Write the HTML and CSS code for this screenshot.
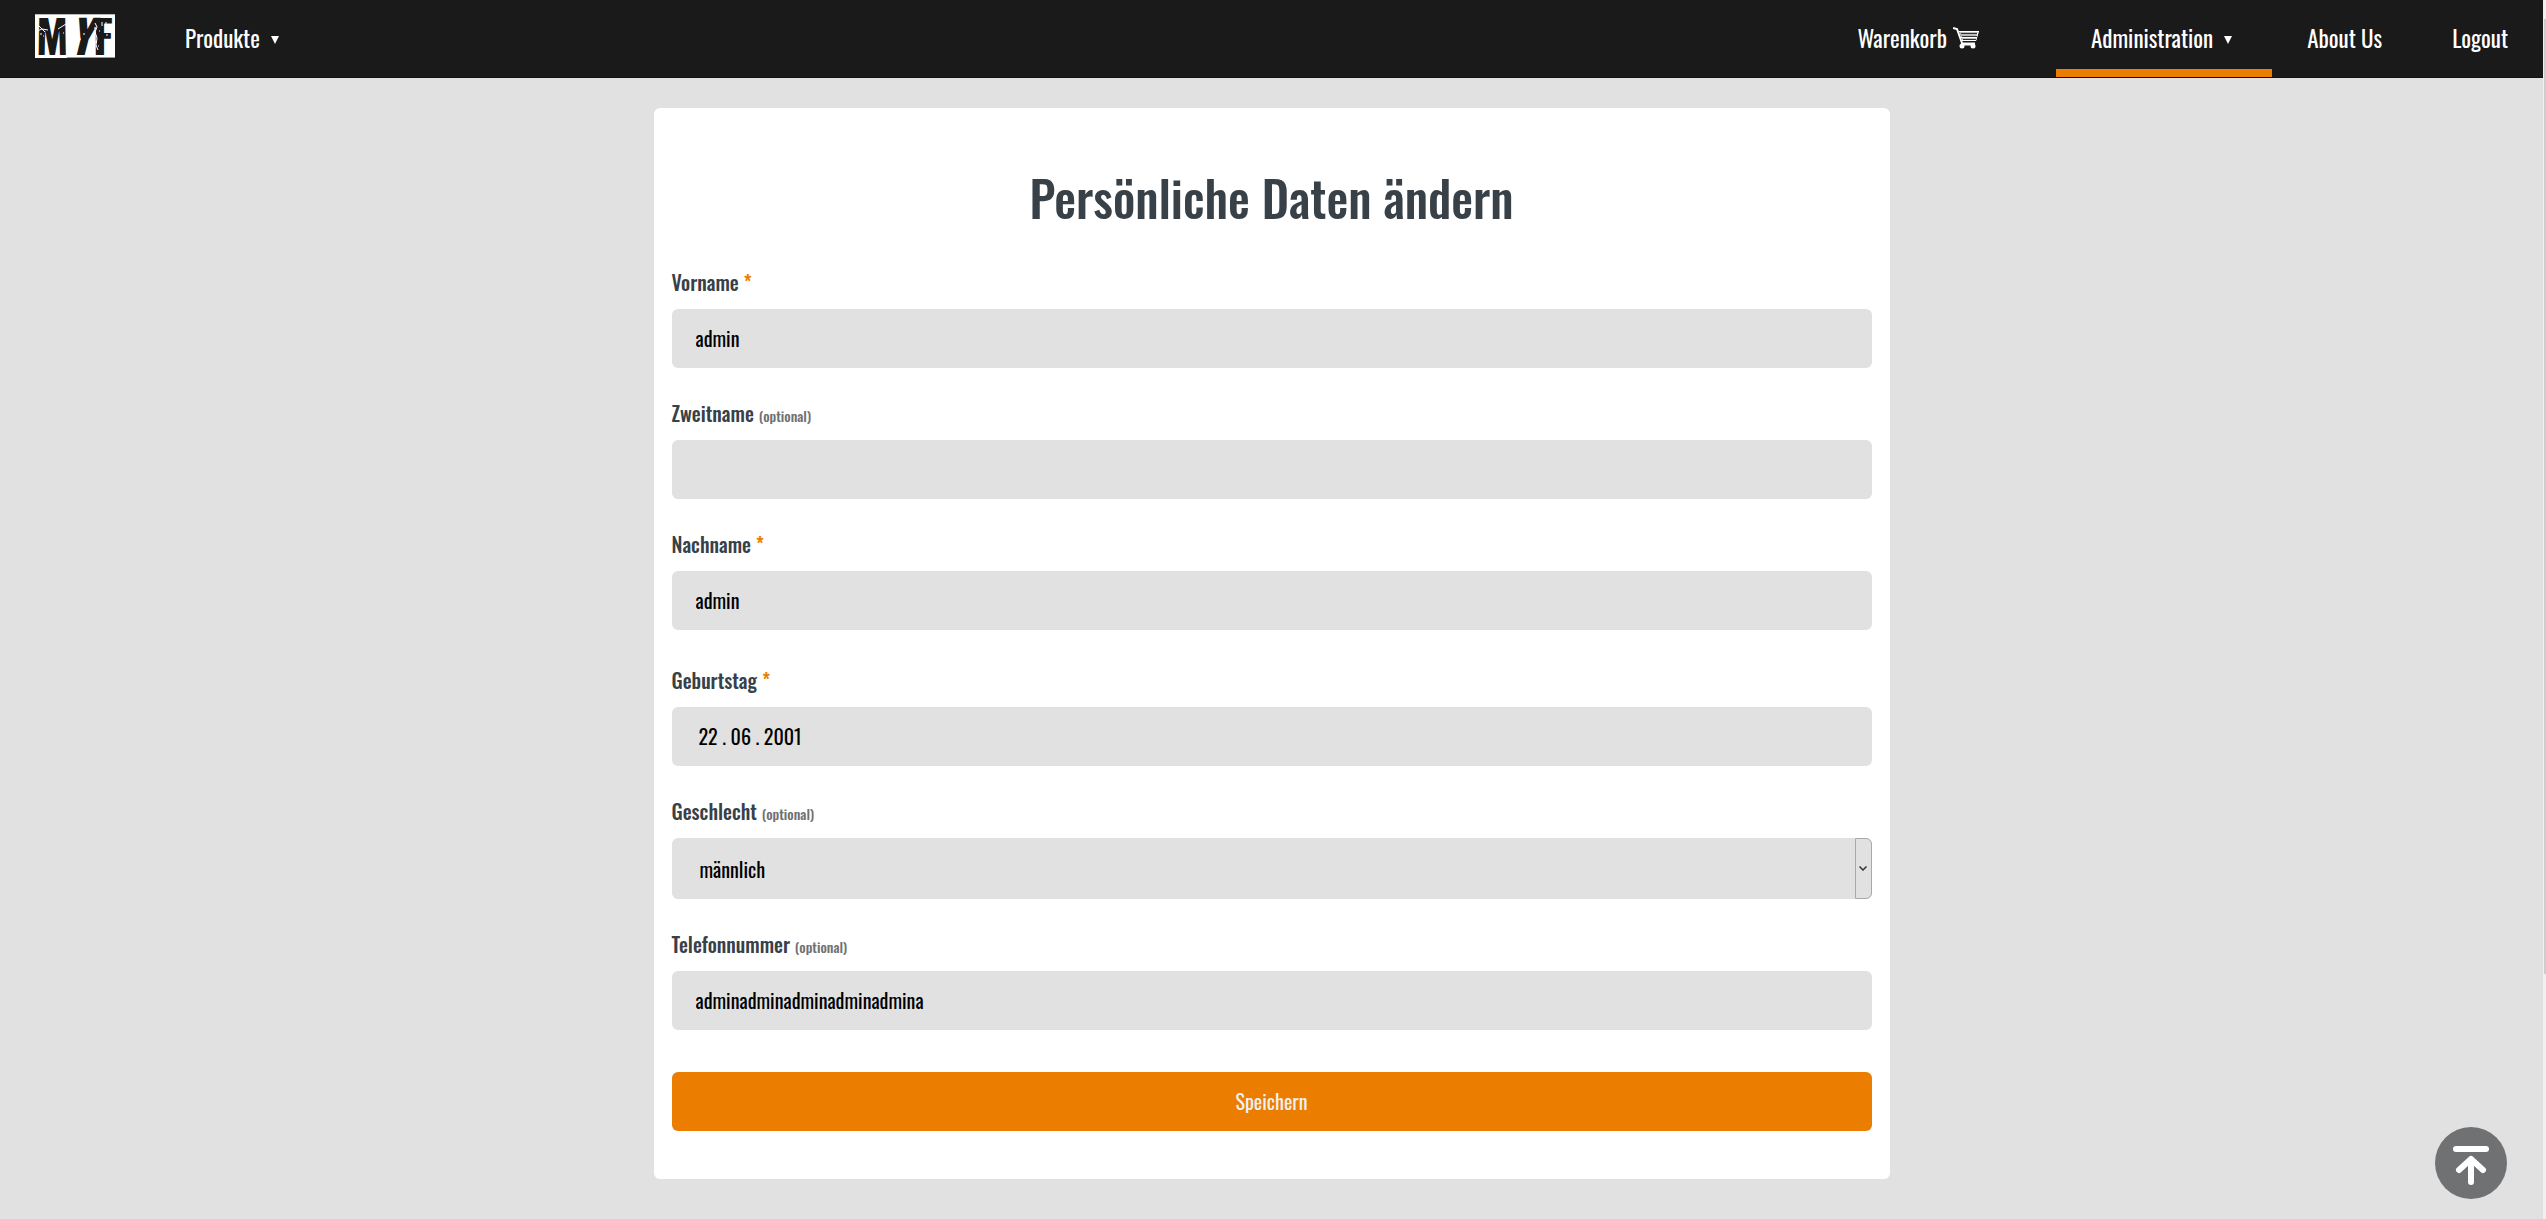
FILE: index.html
```html
<!DOCTYPE html>
<html lang="de">
<head>
<meta charset="utf-8">
<title>Persönliche Daten ändern</title>
<link rel="stylesheet" href="styles.css">
</head>
<body>
<div class="page">
  <header class="navbar">
    <nav class="nav-group">
      <a class="logo" href="#" aria-label="MYF">
        <span>M</span><i>Y</i><span>F</span>
        <svg class="logo-wear" viewBox="0 0 80 44" aria-hidden="true">
          <path d="M0 .5H80" stroke="#bbb"/><path d="M32 43.500H80" stroke="#999"/>
          <path d="M2 17l5-2 6 1M3 11l7 7M23 15l8-5M60 9l2 4-2 5 2 6-1 7 2 5M67 8v4" fill="none" stroke="#fff"/>
          <path d="M5 20h2M8 22h1M28 19h1M43 14h1M48 20h2M45 25h1M41 36h2M59 14h2M64 17h1M60 28h2M63 32h1M70 9h2M74 12h1M71 21h2" stroke="#fff"/>
        </svg>
      </a>
      <a class="nav-link" href="#">Produkte<span class="caret"></span></a>
    </nav>
    <nav class="nav-group">
      <a class="nav-link nav-cart" href="#">Warenkorb
        <svg class="cart" viewBox="0 0 26 22" aria-hidden="true">
          <path d="M0 1l4 1 5 14" fill="none" stroke="#fff" stroke-width="2"/>
          <path d="M6 4h20l-3 10H9z" fill="#bbb"/>
          <path d="M6 4.500h20M7 10.500h17M9 13.500h14M25.500 4l-3 10" fill="none" stroke="#fff" stroke-width="1"/>
          <path d="M8 6.500h16M9 9.500h15M10 12.500h13" stroke="#333"/>
          <path d="M8 17h14" stroke="#fff" stroke-width="3"/>
          <circle cx="9" cy="19" r="2.500" fill="#fff"/><circle cx="20" cy="19" r="2.500" fill="#fff"/>
        </svg>
      </a>
      <a class="nav-link nav-active" href="#">Administration<span class="caret"></span></a>
      <a class="nav-link" href="#">About Us</a>
      <a class="nav-link" href="#">Logout</a>
    </nav>
  </header>
  <main class="main">
    <form class="card">
      <h1 class="title">Persönliche Daten ändern</h1>
      <div class="field">
        <label class="label" for="vorname">Vorname <span class="required">*</span></label>
        <input class="control" id="vorname" type="text" value="admin">
      </div>
      <div class="field">
        <label class="label" for="zweitname">Zweitname <span class="optional">(optional)</span></label>
        <input class="control" id="zweitname" type="text">
      </div>
      <div class="field field-last">
        <label class="label" for="nachname">Nachname <span class="required">*</span></label>
        <input class="control" id="nachname" type="text" value="admin">
      </div>
      <div class="field">
        <label class="label" for="geburtstag">Geburtstag <span class="required">*</span></label>
        <input class="control control-date" id="geburtstag" type="text" value="22 . 06 . 2001">
      </div>
      <div class="field">
        <label class="label" for="geschlecht">Geschlecht <span class="optional">(optional)</span></label>
        <div class="select-wrap">
          <select class="control control-select" id="geschlecht"><option>männlich</option><option>weiblich</option></select>
          <span class="select-arrow"><svg viewBox="0 0 8 5" width="8" height="5" aria-hidden="true"><path d="M.5.5 4 4 7.500.5" fill="none" stroke="#333" stroke-width="1.500"/></svg></span>
        </div>
      </div>
      <div class="field">
        <label class="label" for="telefon">Telefonnummer <span class="optional">(optional)</span></label>
        <input class="control" id="telefon" type="text" value="adminadminadminadminadmina">
      </div>
      <button class="submit" type="submit">Speichern</button>
    </form>
  </main>
</div>
<button class="to-top" type="button" aria-label="Nach oben">
  <svg viewBox="0 0 72 72" width="72" height="72" aria-hidden="true">
    <circle cx="36" cy="36" r="36" fill="#707172"/>
    <path d="M21 22h30" fill="none" stroke="#fff" stroke-width="6" stroke-linecap="round"/>
    <path d="M36 55V33M24 43l12-11 12 11" fill="none" stroke="#fff" stroke-width="6" stroke-linecap="round" stroke-linejoin="round"/>
  </svg>
</button>
<div class="scrollbar"><div class="scrollbar-thumb"></div></div>
</body>
</html>
```
FILE: styles.css
```css
* { box-sizing: border-box; }
body {
  margin: 0;
  padding-right: 3px;
  background: #e1e1e1;
  color: #384048;
  font-family: Oswald, "Liberation Sans Narrow", "Roboto Condensed", sans-serif;
}
.page { min-height: 100vh; }
.navbar {
  display: flex;
  justify-content: space-between;
  height: 78px;
  background: #1a1a1a;
  border-bottom: 1px solid #111;
}
.nav-group { display: flex; }
.nav-link {
  display: flex;
  align-items: center;
  padding: 6px 35px 0;
  border-bottom: 8px solid transparent;
  color: #fff;
  font-size: 23px;
  text-decoration: none;
}
.nav-active { border-bottom-color: #eb7d00; }
.nav-cart { margin-right: 42px; }
.caret {
  width: 0;
  margin: 4px 5px 0 11px;
  border: 4px solid transparent;
  border-top: 8px solid #fff;
  border-bottom: 0;
}
.cart { width: 26px; height: 22px; margin-left: 6px; }
.logo {
  position: relative;
  display: flex;
  justify-content: space-between;
  width: 80px;
  height: 44px;
  margin: 14px 35px 0;
  padding: 0 2px 0 1px;
  background: #fff;
  color: #1a1a1a;
  font-size: 46px;
  font-weight: 700;
  line-height: 40px;
  text-decoration: none;
}
.logo-wear { position: absolute; inset: 0; }
.main { padding: 30px 24px 40px; }
.card {
  display: flex;
  flex-direction: column;
  max-width: 1236px;
  margin: 0 auto;
  padding: 52px 18px 48px;
  border-radius: 6px;
  background: #fff;
}
.title {
  margin: 0 0 34px;
  font-size: 49px;
  font-weight: 500;
  line-height: 75px;
  text-align: center;
}
.field { display: flex; flex-direction: column; margin-bottom: 32px; }
.field-last { margin-bottom: 37px; }
.label {
  height: 40px;
  font-size: 20px;
  font-weight: 500;
  line-height: 26px;
}
.required { color: #eb7d00; }
.optional { color: #707172; font-size: 14px; }
.control {
  width: 100%;
  height: 59px;
  padding: 0 24px 1px;
  border: 0;
  border-radius: 6px;
  background: #e1e1e1;
  color: #000;
  font: inherit;
  font-size: 20px;
}
.control-date { padding-left: 27px; }
.select-wrap { position: relative; }
.control-select { display: block; height: 61px; padding: 0 28px; appearance: none; }
.select-arrow {
  position: absolute;
  top: 0;
  right: 0;
  bottom: 0;
  display: flex;
  align-items: center;
  justify-content: center;
  width: 17px;
  border: 1px solid #a9a9a9;
  border-radius: 0 6px 6px 0;
  pointer-events: none;
}
.submit {
  height: 59px;
  margin-top: 10px;
  padding: 0 0 2px;
  border: 0;
  border-radius: 6px;
  background: #eb7d00;
  color: #f0f0f0;
  font: inherit;
  font-size: 20px;
}
.to-top {
  position: fixed;
  right: 39px;
  bottom: 20px;
  width: 72px;
  height: 72px;
  padding: 0;
  border: 0;
  background: none;
}
.to-top svg { display: block; }
.scrollbar {
  position: fixed;
  top: 0;
  right: 0;
  bottom: 0;
  width: 3px;
  padding: 19px 0 0 1px;
  background: #f0f0f0;
}
.scrollbar-thumb { height: 955px; background: #cdcdcd; }
```
